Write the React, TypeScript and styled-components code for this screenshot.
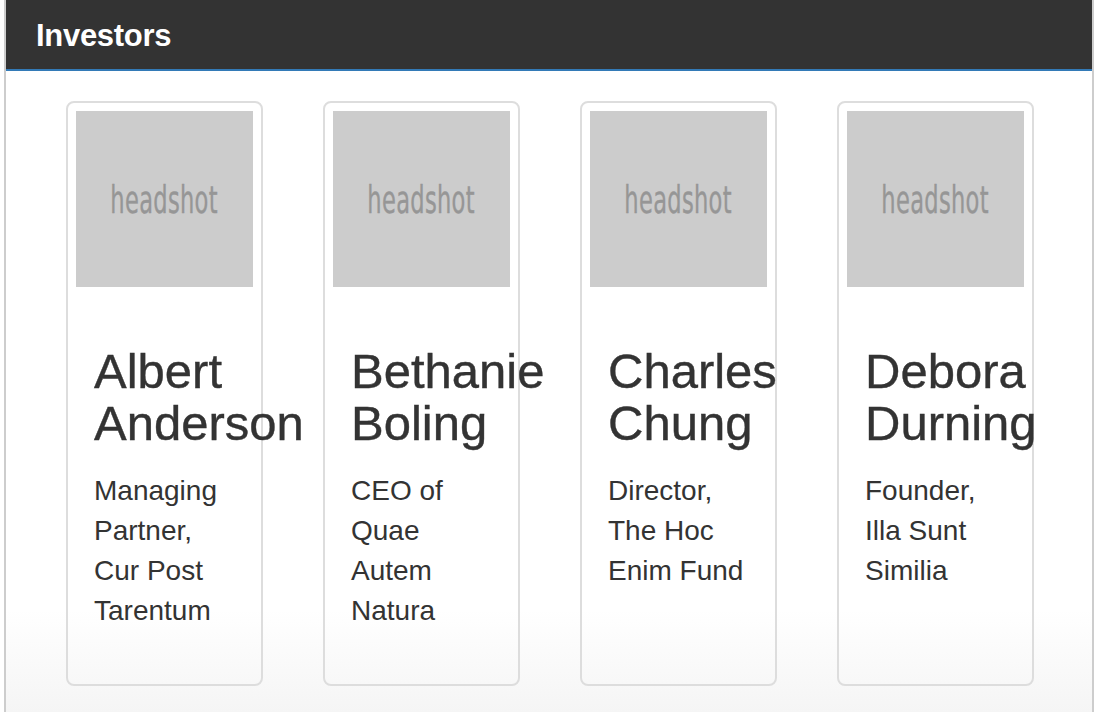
import React from 'react';
import styled, { createGlobalStyle } from 'styled-components';

type Investor = {
  first: string;
  last: string;
  role: string;
};

const investors: Investor[] = [
  { first: 'Albert', last: 'Anderson', role: 'Managing Partner, Cur Post Tarentum' },
  { first: 'Bethanie', last: 'Boling', role: 'CEO of Quae Autem Natura' },
  { first: 'Charles', last: 'Chung', role: 'Director, The Hoc Enim Fund' },
  { first: 'Debora', last: 'Durning', role: 'Founder, Illa Sunt Similia' },
];

const GlobalStyle = createGlobalStyle`
  html, body {
    margin: 0;
    padding: 0;
    overflow: hidden;
    background: #fff;
  }
  body {
    font-family: "Liberation Sans", Arial, sans-serif;
    color: #333;
  }
`;

const Panel = styled('section')`
  margin: 0 8px 0 4px;
  height: 712px;
  box-sizing: border-box;
  border: 2px solid #cdcdcd;
  border-top: none;
  border-bottom: none;
  background: linear-gradient(to bottom, #fff 610px, #f5f5f5 712px);
`;

const Heading = styled('header')`
  height: 69px;
  display: flex;
  align-items: center;
  padding: 0 30px;
  background-color: #333;
  border-bottom: 2px solid #337ab7;
`;

const Title = styled('h2')`
  margin: 0;
  color: #fff;
  font-size: 31px;
  font-weight: bold;
  letter-spacing: -0.3px;
  line-height: 1;
  position: relative;
  top: 1px;
`;

const Body = styled('div')`
  padding: 30px 28px 0 30px;
`;

const Row = styled('ul')`
  list-style: none;
  margin: 0;
  padding: 0;
  display: grid;
  grid-template-columns: repeat(4, minmax(0, 1fr));
  align-items: stretch;
`;

const Col = styled('li')`
  min-width: 0;
  padding: 0 30px;
  display: flex;
`;

const Thumbnail = styled('div')`
  flex: 1;
  min-width: 0;
  min-height: 585px;
  box-sizing: border-box;
  padding: 8px;
  border: 2px solid #ddd;
  border-radius: 8px;
`;

const Headshot = styled('div')`
  height: 176px;
  background-color: #ccc;
  display: flex;
  align-items: center;
  justify-content: center;
  overflow: hidden;
`;

const HeadshotLabel = styled('span')`
  color: #969696;
  font-family: "DejaVu Sans", "Liberation Sans", sans-serif;
  font-size: 37px;
  letter-spacing: 0.5px;
  transform: scaleX(0.61);
  -webkit-text-stroke: 0.4px #969696;
  position: relative;
  top: 1px;
`;

const Caption = styled('div')`
  padding: 18px;
`;

const Name = styled('h3')`
  margin: 40px 0 22px;
  font-size: 49px;
  font-weight: normal;
  line-height: 52px;
  color: #333;
  -webkit-text-stroke: 0.4px #333;
  white-space: nowrap;
`;

const Role = styled('p')`
  margin: 0 0 20px;
  font-size: 28px;
  line-height: 40px;
`;

function App() {
  return (
    <>
      <GlobalStyle />
      <Panel>
        <Heading>
          <Title>Investors</Title>
        </Heading>
        <Body>
          <Row>
            {investors.map((item) => (
              <Col key={item.last}>
                <Thumbnail>
                  <Headshot>
                    <HeadshotLabel>headshot</HeadshotLabel>
                  </Headshot>
                  <Caption>
                    <Name>
                      {item.first}
                      <br />
                      {item.last}
                    </Name>
                    <Role>{item.role}</Role>
                  </Caption>
                </Thumbnail>
              </Col>
            ))}
          </Row>
        </Body>
      </Panel>
    </>
  );
}

export default App;
